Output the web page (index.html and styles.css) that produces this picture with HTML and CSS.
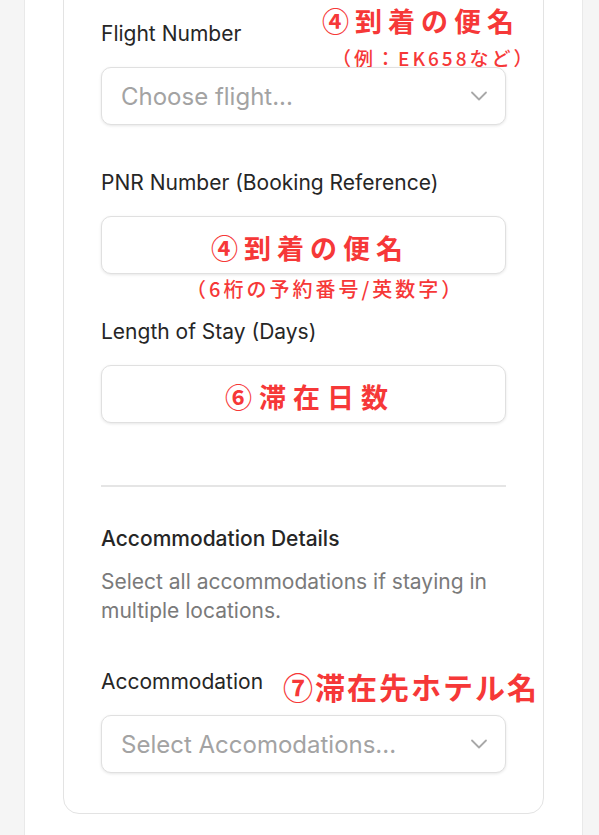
FILE: index.html
```html
<!DOCTYPE html>
<html lang="ja">
<head>
    <meta charset="UTF-8">
    <meta name="viewport" content="width=device-width, initial-scale=1.0">
    <title>Travel Details</title>
    <link rel="stylesheet" href="styles.css">
</head>
<body>
    <div class="panel">
        <div class="card">
            <div class="field">
                <label class="field-label">Flight Number</label>
                <span class="note note-flight">④到着の便名</span>
                <span class="note note-flight-sub">（例：EK658など）</span>
                <div class="control select">
                    <span class="placeholder">Choose flight...</span>
                    <svg class="chevron" width="18" height="18" viewBox="0 0 18 18"><path d="M2 5.5l7 7 7-7" fill="none" stroke="#a8a8a8" stroke-width="1.8" stroke-linecap="round" stroke-linejoin="round"/></svg>
                </div>
            </div>

            <div class="field">
                <label class="field-label">PNR Number (Booking Reference)</label>
                <div class="control text-box">
                    <span class="note-inline">④到着の便名</span>
                    <span class="note note-pnr-sub">（6桁の予約番号/英数字）</span>
                </div>
            </div>

            <div class="field">
                <label class="field-label">Length of Stay (Days)</label>
                <div class="control text-box">
                    <span class="note-inline wide">⑥滞在日数</span>
                </div>
            </div>

            <hr class="divider">

            <div class="section-head">
                <h3 class="section-title">Accommodation Details</h3>
                <p class="section-desc">Select all accommodations if staying in multiple locations.</p>
            </div>

            <div class="field">
                <label class="field-label">Accommodation</label>
                <span class="note note-hotel">⑦滞在先ホテル名</span>
                <div class="control select">
                    <span class="placeholder">Select Accomodations...</span>
                    <svg class="chevron" width="18" height="18" viewBox="0 0 18 18"><path d="M2 5.5l7 7 7-7" fill="none" stroke="#a8a8a8" stroke-width="1.8" stroke-linecap="round" stroke-linejoin="round"/></svg>
                </div>
            </div>
        </div>
    </div>
</body>
</html>
```

FILE: styles.css
```css
body {
    font-family: 'Inter', 'Noto Sans', sans-serif;
    margin: 0;
    padding: 0;
    background-color: #f5f5f5;
    height: 835px;
    overflow: hidden;
}
.panel {
    display: flow-root;
    margin: 0 16px 0 24px;
    background-color: #fff;
    border-left: 1px solid #e9e9e9;
    border-right: 1px solid #e9e9e9;
    height: 835px;
    padding: 0 38px;
}
.card {
    margin-top: -40px;
    padding: 61px 37px 40px 37px;
    border: 1px solid #e3e3e3;
    border-radius: 16px;
}
.field {
    position: relative;
    display: flex;
    flex-direction: column;
    gap: 21px;
    margin-bottom: 46px;
}
.field:last-child {
    margin-bottom: 0;
}
.field-label {
    font-size: 21px;
    line-height: 24px;
    color: #262626;
}
.control {
    position: relative;
    height: 56px;
    border: 1px solid #e0e0e0;
    border-radius: 10px;
    background-color: #fff;
    box-shadow: 0 1px 3px rgba(0, 0, 0, 0.1);
    display: flex;
    align-items: center;
}
.select {
    justify-content: space-between;
    padding: 0 17px 0 19px;
}
.placeholder {
    font-size: 24px;
    color: #a3a3a3;
}
.text-box {
    justify-content: center;
    padding-left: 13px;
}
.note,
.note-inline {
    font-family: 'Noto Sans CJK JP', sans-serif;
    font-weight: 700;
    color: #f63838;
    line-height: 1;
    white-space: nowrap;
}
.note {
    position: absolute;
}
.note-inline {
    font-size: 27px;
    letter-spacing: 6px;
    margin-top: 4px;
}
.note-inline.wide {
    letter-spacing: 7px;
}
.note-flight {
    top: -15px;
    left: 221px;
    font-size: 27px;
    letter-spacing: 6px;
}
.note-flight-sub {
    top: 26px;
    left: 231px;
    font-size: 19px;
    font-weight: 500;
    letter-spacing: 3px;
}
.note-pnr-sub {
    top: calc(100% + 6px);
    left: 84px;
    font-size: 20px;
    font-weight: 500;
    letter-spacing: 3px;
}
.note-hotel {
    top: 1px;
    left: 182px;
    font-size: 30px;
    letter-spacing: 2px;
}
.divider {
    border: none;
    border-top: 2px solid #e5e5e5;
    margin: 62px 0 40px 0;
}
.section-head {
    margin-bottom: 45px;
}
.section-title {
    margin: 0 0 16px 0;
    font-size: 21px;
    line-height: 24px;
    font-weight: 500;
    color: #262626;
}
.section-desc {
    margin: 0;
    font-size: 21px;
    line-height: 29px;
    color: #7a7a7a;
}
```
